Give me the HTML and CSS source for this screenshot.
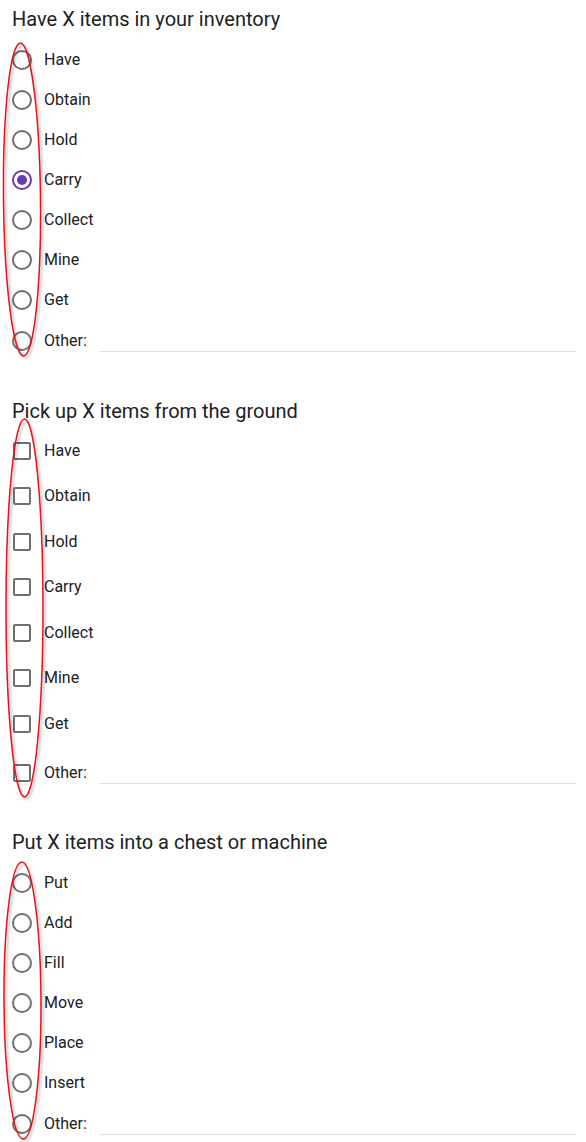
FILE: index.html
```html
<!DOCTYPE html>
<html>
<head>
<meta charset="utf-8">
<link rel="stylesheet" href="styles.css">
</head>
<body>
<div class="page">
  <section class="question q1">
    <h2 class="title">Have X items in your inventory</h2>
    <ul class="options radio-list">
      <li class="option"><span class="radio"></span><span class="label">Have</span></li>
      <li class="option"><span class="radio"></span><span class="label">Obtain</span></li>
      <li class="option"><span class="radio"></span><span class="label">Hold</span></li>
      <li class="option"><span class="radio checked"></span><span class="label">Carry</span></li>
      <li class="option"><span class="radio"></span><span class="label">Collect</span></li>
      <li class="option"><span class="radio"></span><span class="label">Mine</span></li>
      <li class="option"><span class="radio"></span><span class="label">Get</span></li>
      <li class="option other"><span class="radio"></span><span class="label">Other:</span><span class="other-input"></span></li>
    </ul>
  </section>

  <section class="question q2">
    <h2 class="title">Pick up X items from the ground</h2>
    <ul class="options check-list">
      <li class="option"><span class="box"><span class="check"></span></span><span class="label">Have</span></li>
      <li class="option"><span class="box"><span class="check"></span></span><span class="label">Obtain</span></li>
      <li class="option"><span class="box"><span class="check"></span></span><span class="label">Hold</span></li>
      <li class="option"><span class="box"><span class="check"></span></span><span class="label">Carry</span></li>
      <li class="option"><span class="box"><span class="check"></span></span><span class="label">Collect</span></li>
      <li class="option"><span class="box"><span class="check"></span></span><span class="label">Mine</span></li>
      <li class="option"><span class="box"><span class="check"></span></span><span class="label">Get</span></li>
      <li class="option other"><span class="box"><span class="check"></span></span><span class="label">Other:</span><span class="other-input"></span></li>
    </ul>
  </section>

  <section class="question q3">
    <h2 class="title">Put X items into a chest or machine</h2>
    <ul class="options radio-list">
      <li class="option"><span class="radio"></span><span class="label">Put</span></li>
      <li class="option"><span class="radio"></span><span class="label">Add</span></li>
      <li class="option"><span class="radio"></span><span class="label">Fill</span></li>
      <li class="option"><span class="radio"></span><span class="label">Move</span></li>
      <li class="option"><span class="radio"></span><span class="label">Place</span></li>
      <li class="option"><span class="radio"></span><span class="label">Insert</span></li>
      <li class="option other"><span class="radio"></span><span class="label">Other:</span><span class="other-input"></span></li>
    </ul>
  </section>

  <svg class="annotations" width="586" height="1142" viewBox="0 0 586 1142" xmlns="http://www.w3.org/2000/svg">
    <defs>
      <filter id="shadow" x="-50%" y="-10%" width="200%" height="120%">
        <feDropShadow dx="2" dy="2" stdDeviation="1.2" flood-color="#000" flood-opacity="0.28"/>
      </filter>
    </defs>
    <g fill="none" stroke="#e0131a" stroke-width="1.5" filter="url(#shadow)">
      <ellipse cx="22" cy="199.5" rx="18.5" ry="156.5" transform="rotate(-0.6 22 199.5)"/>
      <ellipse cx="24.5" cy="608" rx="18.5" ry="189"/>
      <ellipse cx="22.5" cy="1000.5" rx="18.5" ry="138.5" transform="rotate(-0.3 22.5 1000.5)"/>
    </g>
  </svg>
</div>
</body>
</html>
```

FILE: styles.css
```css
html, body {
  margin: 0;
  padding: 0;
  background: #ffffff;
}

body {
  font-family: Roboto, "Liberation Sans", Arial, sans-serif;
  color: #202124;
}

.page {
  position: relative;
  width: 586px;
  height: 1142px;
  overflow: hidden;
}

.question {
  display: flex;
  flex-direction: column;
}

.q1 { padding-top: 7px; }
.q2 { padding-top: 37px; }
.q3 { padding-top: 31px; }

.title {
  margin: 0 0 0 12px;
  font-size: 20px;
  font-weight: 400;
  line-height: 24px;
  color: #202124;
}

.options {
  list-style: none;
  margin: 0;
  padding: 0;
  display: flex;
  flex-direction: column;
}

.radio-list { padding-top: 9px; }
.check-list { padding-top: 5px; }

.option {
  display: flex;
  align-items: center;
  height: 40px;
  padding-left: 12px;
  gap: 12px;
}

.check-list .option { height: 45.5px; }

.radio-list .option.other { height: 42px; }
.check-list .option.other { height: 52px; }

.label {
  font-size: 16px;
  line-height: 20px;
  color: #202124;
  white-space: nowrap;
}

.radio {
  box-sizing: border-box;
  flex: 0 0 20px;
  width: 20px;
  height: 20px;
  border: 2px solid #6f6f6f;
  border-radius: 50%;
  display: flex;
  align-items: center;
  justify-content: center;
}

.radio.checked {
  border-color: #673ab7;
}

.radio.checked::after {
  content: "";
  width: 10px;
  height: 10px;
  border-radius: 50%;
  background: #673ab7;
}

.box {
  flex: 0 0 20px;
  width: 20px;
  height: 20px;
  display: flex;
  align-items: center;
  justify-content: center;
}

.check {
  box-sizing: border-box;
  width: 18px;
  height: 18px;
  border: 2px solid #6f6f6f;
  border-radius: 2px;
}

.other-input {
  flex: 1 1 auto;
  align-self: flex-end;
  height: 1px;
  margin-right: 10px;
  margin-bottom: 10px;
  background: #e0e0e0;
}

.check-list .other-input {
  margin-bottom: 15px;
}

.annotations {
  position: absolute;
  left: 0;
  top: 0;
  pointer-events: none;
}
```
